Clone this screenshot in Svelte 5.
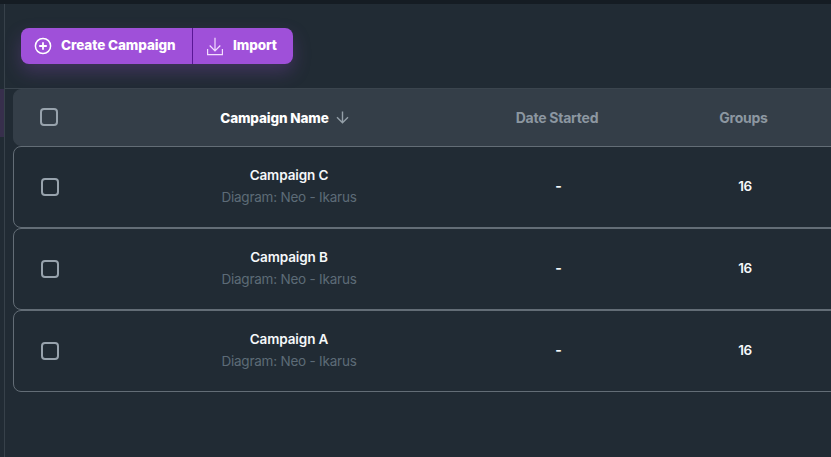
<script>
  const campaigns = [
    { name: 'Campaign C', diagram: 'Neo - Ikarus', started: '-', groups: 16 },
    { name: 'Campaign B', diagram: 'Neo - Ikarus', started: '-', groups: 16 },
    { name: 'Campaign A', diagram: 'Neo - Ikarus', started: '-', groups: 16 }
  ];
</script>

<div class="screen">
  <div class="topbar"></div>
  <div class="body">
    <aside><div class="active"></div></aside>
    <main>
      <div class="toolbar">
        <div class="buttons">
          <button class="create">
            <svg width="18" height="18" viewBox="0 0 18 18" fill="none" stroke="#fff">
              <circle cx="9" cy="9" r="7.6" stroke-width="1.5" />
              <path d="M9 5.2v7.6M5.2 9h7.6" stroke-width="1.8" />
            </svg>
            <span>Create Campaign</span>
          </button>
          <button class="import">
            <svg width="18" height="19" viewBox="0 0 18 19" fill="none" stroke="#f3ddff" stroke-width="1.2">
              <path d="M9 .8v13M3.7 8.5 9 13.8l5.3-5.3M1.6 12v5.6h14.8V12" />
            </svg>
            <span>Import</span>
          </button>
        </div>
      </div>
      <div class="table">
        <div class="row head">
          <div class="check"><span class="box"></span></div>
          <div class="cell sorted">
            <span class="title">Campaign Name</span>
            <svg width="13" height="13" viewBox="0 0 13 13" fill="none" stroke="#949fa8" stroke-width="1.4">
              <path d="M6.5.5v11M1 6.2l5.5 5.5L12 6.2" />
            </svg>
          </div>
          <div class="cell"><span class="date">Date Started</span></div>
          <div class="cell"><span class="groups">Groups</span></div>
        </div>
        {#each campaigns as c}
          <div class="row">
            <div class="check"><span class="box"></span></div>
            <div class="cell stack">
              <span class="name">{c.name}</span>
              <span class="diagram">Diagram: {c.diagram}</span>
            </div>
            <div class="cell dash">{c.started}</div>
            <div class="cell number">{c.groups}</div>
          </div>
        {/each}
      </div>
    </main>
  </div>
</div>

<style>
  :global(body) { background: #212b34; overflow: hidden; }
  .screen {
    width: 831px; height: 457px; overflow: hidden; display: flex; flex-direction: column;
    background: #212b34; color: #f5f8fa; font: 500 14px/20px Inter, "Liberation Sans", sans-serif;
  }
  .topbar { height: 4px; background: #151c23; flex: none; }
  .body { display: flex; flex: 1; }
  aside { box-sizing: border-box; width: 5px; border-right: 1px solid #37414a; padding-top: 85px; flex: none; }
  .active { width: 4px; height: 48px; background: #372f4c; }
  main { flex: 1; min-width: 0; }
  .toolbar { box-sizing: border-box; height: 85px; padding: 24px 16px; border-bottom: 1px solid #3b454e; }
  .buttons {
    display: flex; width: 272px; height: 36px; border-radius: 8px; overflow: hidden;
    background: #9f50d9; box-shadow: 0 8px 18px rgba(159, 80, 217, .25);
  }
  button {
    display: flex; align-items: center; box-sizing: border-box; height: 36px; border: 0; margin: 0;
    background: transparent; color: #fff; font: 800 13.5px/20px Inter, "Liberation Sans", sans-serif;
    white-space: nowrap;
  }
  svg { flex: none; }
  button span { padding-bottom: 2px; }
  .create { width: 172px; padding: 0 0 0 13px; gap: 9px; border-right: 1px solid #5a1796; letter-spacing: -.08px; }
  .import { width: 100px; padding: 0 0 0 13px; gap: 9px; letter-spacing: -.1px; }
  .table { margin-left: 8px; width: 900px; }
  .row {
    box-sizing: border-box; display: grid; grid-template-columns: 74px 403px 137px 236px; align-items: center;
    height: 82px; border: 1px solid #636d76; border-radius: 8px;
  }
  .head { height: 57px; background: #343e48; border-color: #343e48; color: #8c97a1; font-weight: 700; }
  .check { padding-left: 27px; }
  .head .check { padding: 0 0 2px 26px; }
  .box { display: block; box-sizing: border-box; width: 18px; height: 18px; border: 2px solid #98a3ad; border-radius: 4px; }
  .cell { display: flex; align-items: center; justify-content: center; white-space: nowrap; }
  .head .cell { margin-left: -5px; }
  .head .sorted { gap: 7px; color: #fff; margin-left: -10px; font-weight: 800; font-size: 13.5px; }
  .title { letter-spacing: -.12px; }
  .date, .groups { letter-spacing: -.25px; }
  .stack { flex-direction: column; gap: 2px; padding-bottom: 3px; margin-left: -1px; }
  .name { font-weight: 600; font-size: 13.5px; letter-spacing: -.1px; }
  .diagram { color: #5d6b77; font-weight: 400; font-size: 13.5px; letter-spacing: -.22px; }
  .dash, .number { padding-bottom: 2px; margin-left: -2px; }
  .dash { font-weight: 700; }
  .number { font-weight: 600; font-size: 13.5px; letter-spacing: -.5px; }
</style>
